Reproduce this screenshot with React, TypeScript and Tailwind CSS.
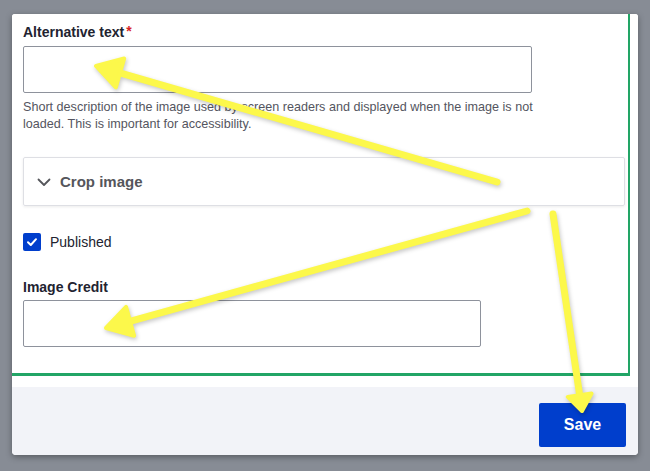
import React from "react";

function Arrow({ tail, tip, len, half }: { tail: [number, number]; tip: [number, number]; len: number; half: number }) {
  const dx = tip[0] - tail[0];
  const dy = tip[1] - tail[1];
  const d = Math.hypot(dx, dy);
  const ux = dx / d;
  const uy = dy / d;
  const bx = tip[0] - ux * len;
  const by = tip[1] - uy * len;
  const px = -uy;
  const py = ux;
  const c1 = [bx + px * half, by + py * half];
  const c2 = [bx - px * half, by - py * half];
  return (
    <g>
      <line x1={tail[0]} y1={tail[1]} x2={bx + ux * 2} y2={by + uy * 2} stroke="#fcf84b" strokeWidth={7} strokeLinecap="round" />
      <polygon
        points={`${tip[0]},${tip[1]} ${c1[0]},${c1[1]} ${c2[0]},${c2[1]}`}
        fill="#fcf84b"
        stroke="#fcf84b"
        strokeWidth={4}
        strokeLinejoin="round"
      />
    </g>
  );
}

export default function App() {
  return (
    <div
      className="relative w-[650px] h-[471px] overflow-hidden bg-[#878c95] pt-[14px] pl-[12px]"
      style={{ fontFamily: '"Liberation Sans", Arial, sans-serif' }}
    >
      <div className="w-[626px] h-[441px] bg-white rounded-b-[4px] rounded-t-[3px] shadow-[0_2px_6px_rgba(0,0,0,0.35)] flex flex-col overflow-hidden">
        <div className="h-[373px] pr-[8px] bg-white">
          <div className="h-[362px] border-r-2 border-b-[3px] border-[#22a566] pl-[11px] pt-[8px] text-[#222330]">
            <div className="h-[20px] text-[14px] leading-[20px] font-bold flex items-start">
              <span>Alternative text</span>
              <span className="ml-[2px] text-[#d72222] text-[14px] leading-[14px] mt-[2px]">*</span>
            </div>
            <div className="mt-[4px] h-[47px] w-[509px] border border-[#8e929c] rounded-[2px] bg-white" />
            <p className="mt-[6px] text-[12.6px] leading-[17px] text-[#545560] w-[540px]">
              Short description of the image used by screen readers and displayed when the image is not
              <br />
              loaded. This is important for accessibility.
            </p>
            <div className="mt-[24px] h-[49px] w-[602px] border border-[#dedfe4] rounded-[2px] shadow-[0_1px_3px_rgba(0,0,0,0.08)] flex items-center pl-[13px]">
              <svg width="14" height="14" viewBox="0 0 14 14" className="shrink-0">
                <path d="M1.5 4.5 L7 10 L12.5 4.5" fill="none" stroke="#55565b" strokeWidth="1.8" strokeLinecap="round" strokeLinejoin="round" />
              </svg>
              <span className="ml-[9px] text-[15px] font-bold text-[#55565b] leading-[20px]">Crop image</span>
            </div>
            <div className="mt-[27px] h-[18px] flex items-center">
              <div className="w-[18px] h-[18px] bg-[#003ecc] rounded-[2px] flex items-center justify-center">
                <svg width="12" height="12" viewBox="0 0 12 12">
                  <path d="M2 6.3 L4.8 9 L10 3.2" fill="none" stroke="white" strokeWidth="2" strokeLinecap="round" strokeLinejoin="round" />
                </svg>
              </div>
              <span className="ml-[9px] text-[14px] leading-[18px] text-[#222330]">Published</span>
            </div>
            <div className="mt-[26px] h-[20px] text-[14px] leading-[20px] font-bold">Image Credit</div>
            <div className="mt-[3px] h-[47px] w-[458px] border border-[#8e929c] rounded-[2px] bg-white" />
          </div>
        </div>
        <div className="flex-1 bg-[#f2f3f8] flex justify-end items-start pt-[16px] pr-[12px]">
          <button className="w-[87px] h-[44px] bg-[#003ecc] rounded-[2px] text-white font-bold text-[16px] leading-[20px]">
            Save
          </button>
        </div>
      </div>
      <svg
        className="absolute left-0 top-0 pointer-events-none"
        width="650"
        height="471"
        viewBox="0 0 650 471"
        style={{ filter: "drop-shadow(1px 2px 2px rgba(0,0,0,0.22))" }}
      >
        <Arrow tail={[497, 182]} tip={[96, 66]} len={25} half={15} />
        <Arrow tail={[527, 211]} tip={[106, 328]} len={25} half={15} />
        <Arrow tail={[553, 214]} tip={[582, 411]} len={16} half={12} />
      </svg>
    </div>
  );
}
